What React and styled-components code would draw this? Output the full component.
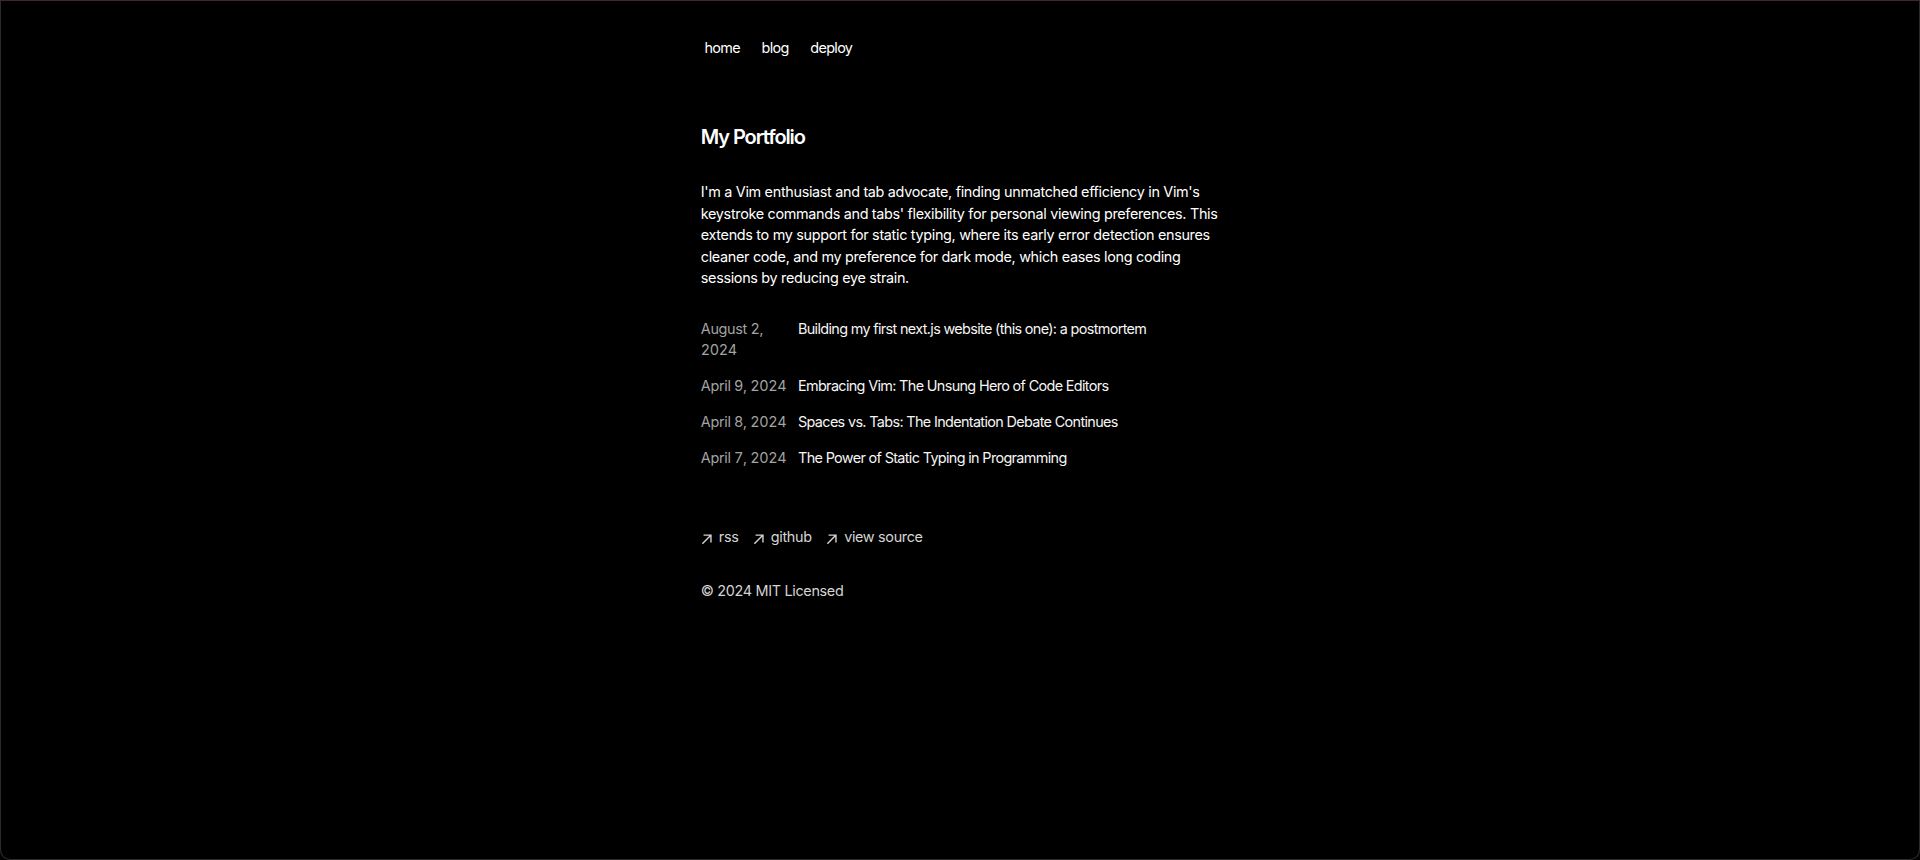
import styled, { createGlobalStyle } from 'styled-components';

const GlobalStyle = createGlobalStyle`
html, body {
  margin: 0;
  padding: 0;
  background: #000;
}
body {
  font-family: Inter, "Noto Sans", "Liberation Sans", sans-serif;
  color: #fff;
  letter-spacing: -0.02em;
  -webkit-font-smoothing: antialiased;
}
* { box-sizing: border-box; }
a { color: inherit; text-decoration: none; }
`;

const Frame = styled.div`
min-height: 100vh;
border: 1px solid #2c2c2c;
border-top-color: #3e2a2a;
border-radius: 0 0 10px 10px;
background: #000;
`;

const Body = styled.div`
max-width: 518.4px;
margin: 28.8px auto 0;
font-size: 14.4px;
line-height: 21.6px;
`;

const Main = styled.main`
display: flex;
flex-direction: column;
min-width: 0;
`;

const Aside = styled.aside`
margin-left: -7.2px;
margin-bottom: 57.6px;
letter-spacing: -0.045em;
`;

const Nav = styled.nav`
display: flex;
flex-direction: row;
align-items: flex-start;
`;

const NavLink = styled.a`
display: flex;
padding: 3.6px 7.2px;
margin: 3.6px;
color: #fff;
`;

const Title = styled.h1`
margin: 0 0 28.8px;
font-size: 20px;
line-height: 28.8px;
font-weight: 600;
letter-spacing: -0.055em;
`;

const Intro = styled.p`
margin: 0 0 14.4px;
`;

const Posts = styled.div`
margin: 28.8px 0;
`;

const PostLink = styled.a`
display: flex;
flex-direction: column;
margin-bottom: 14.4px;
`;

const PostRow = styled.div`
width: 100%;
display: flex;
flex-direction: row;
gap: 7.2px;
`;

const PostDate = styled.p`
margin: 0;
width: 90px;
flex-shrink: 0;
color: #a3a3a3;
font-variant-numeric: tabular-nums;
`;

const PostTitle = styled.p`
margin: 0;
color: #f5f5f5;
letter-spacing: -0.045em;
`;

const Footer = styled.footer`
margin-bottom: 57.6px;
`;

const FooterList = styled.ul`
list-style: none;
padding: 0;
margin: 28.8px 0 0;
display: flex;
flex-direction: row;
gap: 14.4px;
color: #d4d4d4;
`;

const FooterLink = styled.a`
display: flex;
align-items: center;
`;

const FooterLabel = styled.p`
margin: 0 0 0 7.2px;
height: 25.2px;
`;

const Copyright = styled.p`
margin: 28.8px 0 0;
color: #d4d4d4;
`;

const ArrowIcon = () => (
  <svg width="10.8" height="10.8" viewBox="0 0 12 12" fill="none">
    <path
      d="M2.07102 11.3494L0.963068 10.2415L9.2017 1.98864H2.83807L2.85227 0.454545H11.8438V9.46023H10.2955L10.3097 3.09659L2.07102 11.3494Z"
      fill="currentColor"
    />
  </svg>
);

const posts = [
  { date: 'August 2, 2024', title: 'Building my first next.js website (this one): a postmortem' },
  { date: 'April 9, 2024', title: 'Embracing Vim: The Unsung Hero of Code Editors' },
  { date: 'April 8, 2024', title: 'Spaces vs. Tabs: The Indentation Debate Continues' },
  { date: 'April 7, 2024', title: 'The Power of Static Typing in Programming' },
];

const links = ['rss', 'github', 'view source'];

function App() {
  return (
    <Frame>
      <GlobalStyle />
      <Body>
        <Main>
          <Aside>
            <Nav>
              <NavLink href="#">home</NavLink>
              <NavLink href="#">blog</NavLink>
              <NavLink href="#">deploy</NavLink>
            </Nav>
          </Aside>
          <section>
            <Title>My Portfolio</Title>
            <Intro>
              I'm a Vim enthusiast and tab advocate, finding unmatched efficiency in Vim's
              keystroke commands and tabs' flexibility for personal viewing preferences. This
              extends to my support for static typing, where its early error detection ensures
              cleaner code, and my preference for dark mode, which eases long coding sessions
              by reducing eye strain.
            </Intro>
            <Posts>
              {posts.map((post) => (
                <PostLink href="#" key={post.title}>
                  <PostRow>
                    <PostDate>{post.date}</PostDate>
                    <PostTitle>{post.title}</PostTitle>
                  </PostRow>
                </PostLink>
              ))}
            </Posts>
          </section>
          <Footer>
            <FooterList>
              {links.map((label) => (
                <li key={label}>
                  <FooterLink href="#">
                    <ArrowIcon />
                    <FooterLabel>{label}</FooterLabel>
                  </FooterLink>
                </li>
              ))}
            </FooterList>
            <Copyright>© 2024 MIT Licensed</Copyright>
          </Footer>
        </Main>
      </Body>
    </Frame>
  );
}

export default App;
